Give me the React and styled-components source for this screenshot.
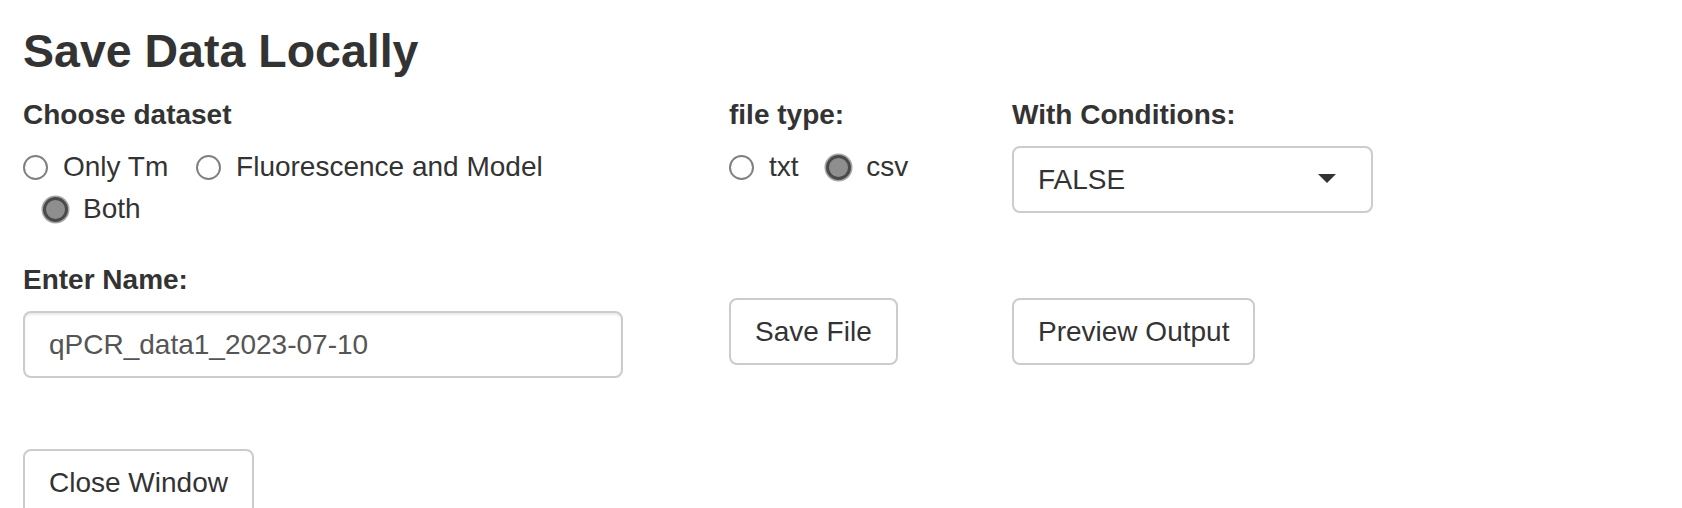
import { Fragment } from 'react';
import styled, { createGlobalStyle, css } from 'styled-components';

const GlobalStyle = createGlobalStyle`
body{
margin: 0;
background: #fff;
color: #333;
font-family: "Liberation Sans", Arial, Helvetica, sans-serif;
}
`

const datasetOptions = [
    { label: 'Only Tm', checked: false },
    { label: 'Fluorescence and Model', checked: false },
    { label: 'Both', checked: true },
];

const fileTypeOptions = [
    { label: 'txt', checked: false },
    { label: 'csv', checked: true },
];

function RadioList({ options, width }) {
    return (
        <RadioGroup $width={width}>
            {options.map((o, i) => (
                <Fragment key={o.label}>
                    {i > 0 && ' '}
                    <Option>
                        <Dot $checked={o.checked} />
                        <span>{o.label}</span>
                    </Option>
                </Fragment>
            ))}
        </RadioGroup>
    );
}

function App() {
    return (
        <Page>
            <GlobalStyle />
            <Title>Save Data Locally</Title>
            <Row>
                <div>
                    <FieldLabel>Choose dataset</FieldLabel>
                    <RadioList options={datasetOptions} width="630px" />
                </div>
                <div>
                    <FieldLabel>file type:</FieldLabel>
                    <RadioList options={fileTypeOptions} />
                </div>
                <div>
                    <FieldLabel>With Conditions:</FieldLabel>
                    <SelectBox>
                        <span>FALSE</span>
                        <Caret />
                    </SelectBox>
                </div>
            </Row>
            <Row $second>
                <div>
                    <FieldLabel>Enter Name:</FieldLabel>
                    <TextField readOnly value="qPCR_data1_2023-07-10" />
                </div>
                <ButtonCell>
                    <Button>Save File</Button>
                </ButtonCell>
                <ButtonCell>
                    <Button>Preview Output</Button>
                </ButtonCell>
            </Row>
            <Footer>
                <Button>Close Window</Button>
            </Footer>
        </Page>
    );
}

const Page = styled.div`
padding: 25px 0 0 23px;
height: 508px;
box-sizing: border-box;
overflow: hidden;
`

const Title = styled.h3`
margin: 0;
font-size: 46.5px;
font-weight: 700;
line-height: 52px;
color: #333;
`

const Row = styled.div`
display: grid;
grid-template-columns: 646px 223px 361px;
column-gap: 60px;
align-items: start;
margin-top: ${props => props.$second ? '30px' : '18px'};
`

const FieldLabel = styled.label`
display: block;
font-size: 28px;
font-weight: 700;
line-height: 40px;
margin-bottom: 11px;
`

const RadioGroup = styled.div`
font-size: 28px;
line-height: 42px;
max-width: ${props => props.$width || 'none'};
`

const Option = styled.label`
display: inline-flex;
align-items: center;
height: 42px;
vertical-align: top;
white-space: nowrap;

& + &{
margin-left: 20px;
}
`

const Dot = styled.span`
width: 25px;
height: 25px;
border-radius: 50%;
box-sizing: border-box;
margin-right: 15px;
flex-shrink: 0;
${props => props.$checked ? css`
background: #8e8e8e;
border: 3px solid #4a4a4a;
box-shadow: 0 0 0 1.5px #a6a6a6;
` : css`
background: #fff;
border: 2px solid #808080;
`}
`

const SelectBox = styled.div`
display: flex;
align-items: center;
justify-content: space-between;
width: 361px;
height: 67px;
box-sizing: border-box;
border: 2px solid #ccc;
border-radius: 8px;
padding: 0 35px 0 24px;
font-size: 28px;
color: #333;
background: #fff;
`

const Caret = styled.span`
width: 0;
height: 0;
border-left: 9px solid transparent;
border-right: 9px solid transparent;
border-top: 9px solid #333;
margin-top: -2px;
`

const TextField = styled.input`
display: block;
width: 600px;
height: 67px;
box-sizing: border-box;
border: 2px solid #ccc;
border-radius: 8px;
padding: 0 24px;
font-family: "Liberation Sans", Arial, sans-serif;
font-size: 28px;
color: #555;
background: #fff;
box-shadow: inset 0 2px 2px rgba(0, 0, 0, 0.075);
outline: none;
`

const ButtonCell = styled.div`
padding-top: 38px;
`

const Button = styled.button`
display: inline-block;
height: 67px;
box-sizing: border-box;
padding: 0 24px;
border: 2px solid #ccc;
border-radius: 8px;
background: #fff;
color: #333;
font-family: "Liberation Sans", Arial, sans-serif;
font-size: 28px;
line-height: 40px;
cursor: pointer;
`

const Footer = styled.div`
margin-top: 71px;
`

export default App;
